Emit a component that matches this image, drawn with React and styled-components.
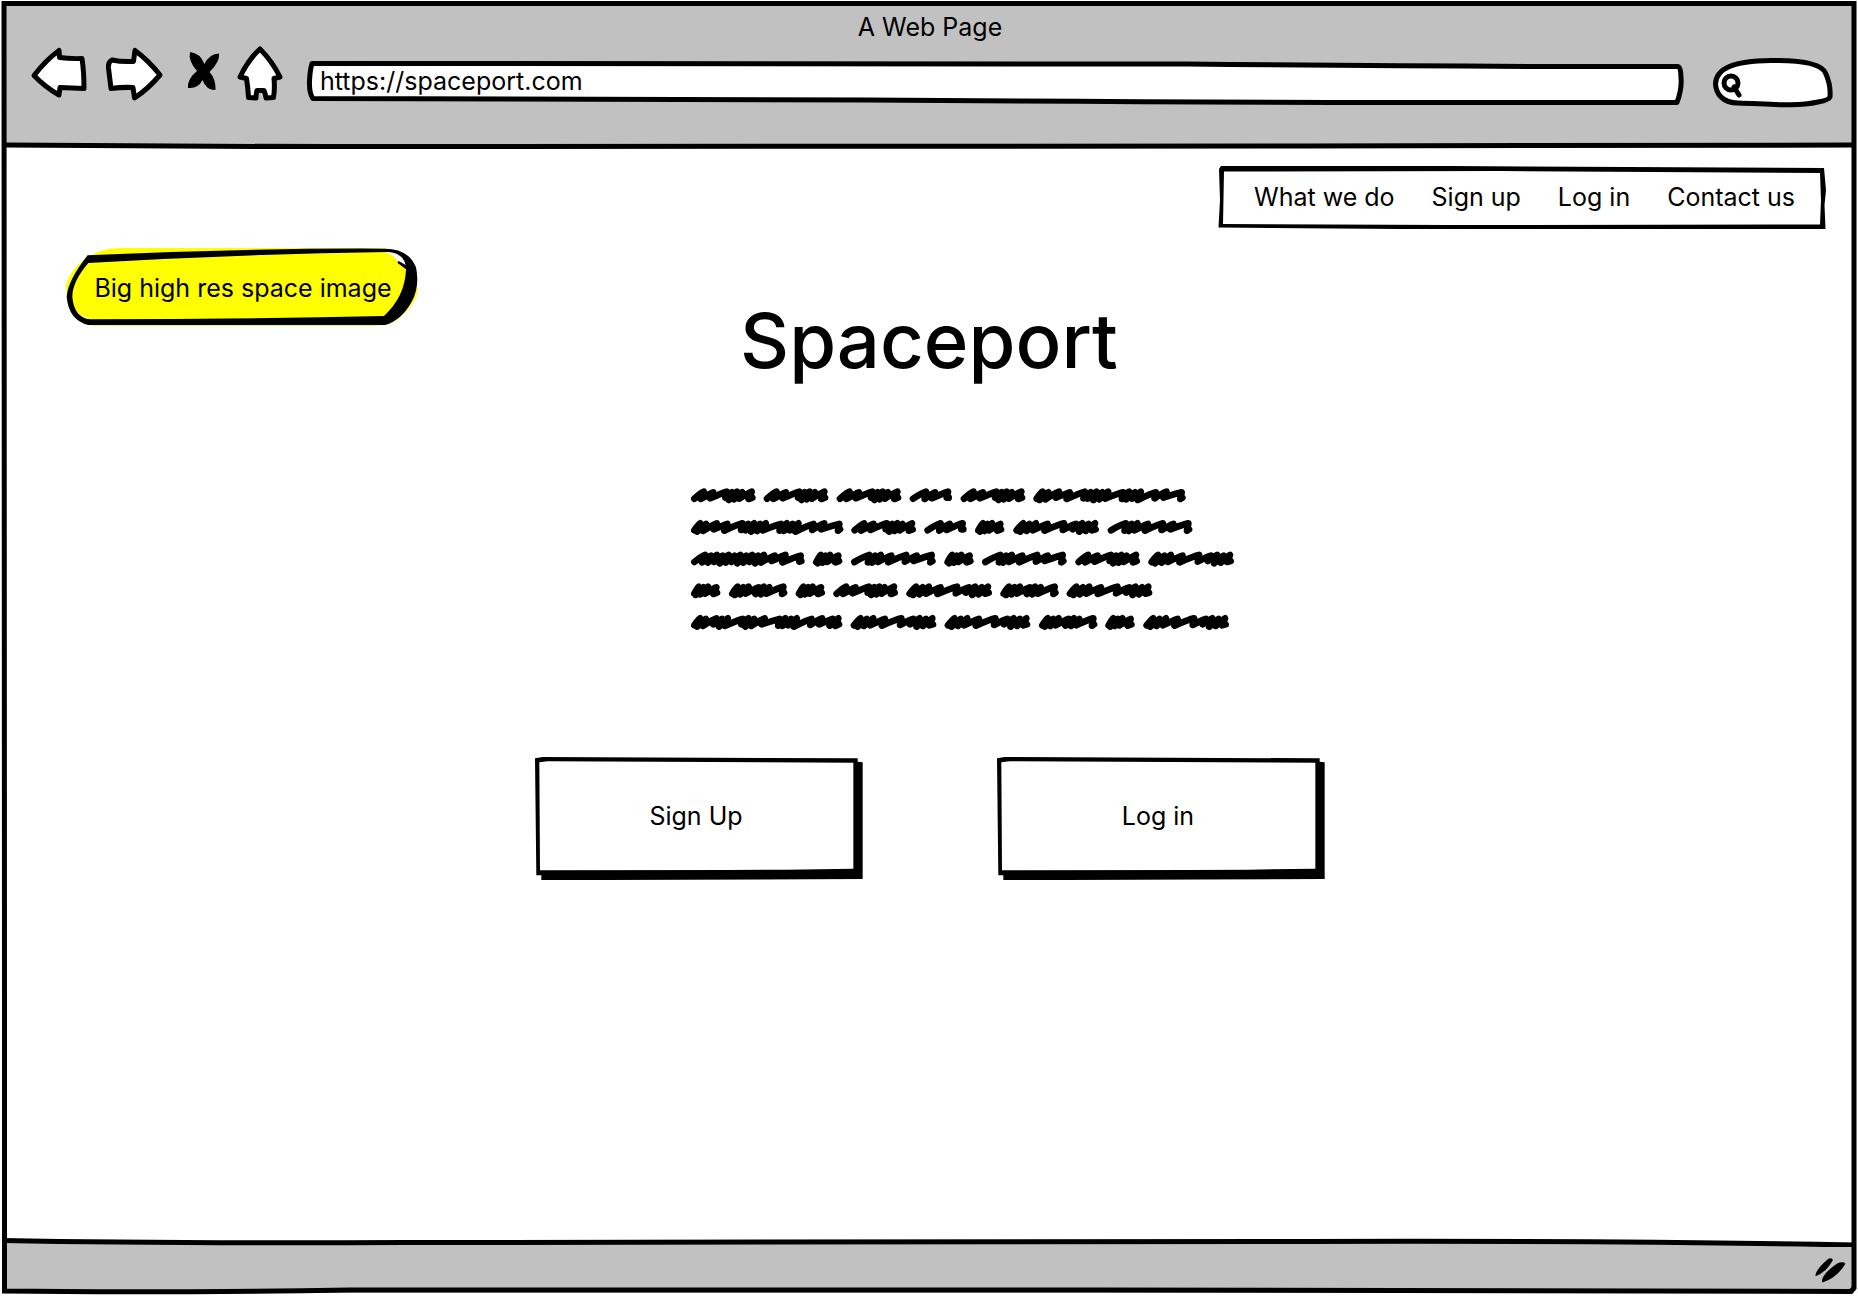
import React from "react";
import styled, { createGlobalStyle } from "styled-components";

const INK = "#000";
const CHROME = "#c1c1c1";

const GlobalStyle = createGlobalStyle`
  *, *::before, *::after { box-sizing: border-box; }
  body {
    margin: 0;
    background: #fff;
    color: ${INK};
    font-family: Inter, "Noto Sans", sans-serif;
    font-size: 25px;
    line-height: 32px;
  }
  button, input { font: inherit; color: inherit; }
`;

const BrowserWindow = styled.div`
  position: relative;
  display: flex;
  flex-direction: column;
  min-height: 100vh;
  padding: 3px 4px;
`;

const Sketch = styled.svg`
  position: absolute;
  inset: 0;
  width: 100%;
  height: 100%;
  pointer-events: none;
  overflow: visible;
  z-index: ${(p) => p.$layer ?? 0};
`;

const Rule = styled.svg`
  display: block;
  flex: none;
  width: 100%;
  height: 10px;
  background: linear-gradient(${(p) => p.$above} 50%, ${(p) => p.$below} 50%);
`;

const Chrome = styled.header`
  padding: 8px 21px 33px 27px;
  background: ${CHROME};
`;

const WindowTitle = styled.div`
  padding-right: 4px;
  text-align: center;
`;

const Toolbar = styled.div`
  display: flex;
  align-items: center;
  height: 64px;
  gap: 28px;
  padding-top: 15px;
`;

const ToolButtons = styled.div`
  display: flex;
  align-self: flex-start;
  gap: 18px;
  margin: -11px -4px 0 0;
`;

const ToolButton = styled.button`
  width: ${(p) => p.$width}px;
  height: 54px;
  padding: 0;
  border: 0;
  background: none;
  cursor: pointer;
  svg { display: block; width: 100%; height: 100%; overflow: visible; }
`;

const Field = styled.label`
  position: relative;
  display: flex;
  align-items: flex-start;
  flex: ${(p) => (p.$width ? "none" : "1")};
  width: ${(p) => (p.$width ? `${p.$width}px` : "auto")};
  height: ${(p) => p.$height}px;
  padding: 4px 14px 0 ${(p) => p.$inset}px;
`;

const FieldInput = styled.input`
  position: relative;
  flex: 1;
  min-width: 0;
  height: 32px;
  padding: 0;
  border: 0;
  outline: 0;
  background: transparent;
`;

const Main = styled.main`
  flex: 1;
  padding: 16px 28px 32px;
`;

const Nav = styled.nav`
  position: relative;
  display: flex;
  justify-content: space-between;
  align-items: center;
  width: 608px;
  height: 63px;
  margin-left: auto;
  padding: 0 31px 2px 36px;
`;

const NavLink = styled.a`
  position: relative;
  color: inherit;
  text-decoration: none;
`;

const Masthead = styled.div`
  display: grid;
  grid-template-columns: 1fr auto 1fr;
  padding: 19px 34px 0;
`;

const Note = styled.div`
  position: relative;
  display: flex;
  align-items: center;
  justify-content: center;
  width: 352px;
  height: 78px;
  padding: 2px 0 0 2px;
  span { position: relative; }
`;

const Heading = styled.h1`
  margin: 44px 0 0;
  font-size: 76px;
  line-height: 96px;
  font-weight: 500;
`;

const Column = styled.div`
  width: 790px;
  margin: 0 auto;
  padding-left: 2px;
  box-sizing: content-box;
`;

const Copy = styled.svg`
  display: block;
  width: 544px;
  height: 146px;
  margin: 100px 0 123px 156px;
`;

const Actions = styled.div`
  display: flex;
  justify-content: space-between;
`;

const ActionButton = styled.button`
  position: relative;
  width: 328px;
  height: 123px;
  padding: 0 6px 6px 0;
  border: 0;
  background: none;
  cursor: pointer;
  span { position: relative; }
`;

const StatusBar = styled.footer`
  display: flex;
  justify-content: flex-end;
  align-items: center;
  height: 46px;
  padding: 0 8px;
  background: ${CHROME};
`;

const Grip = styled.svg`
  width: 32px;
  height: 26px;
`;

/* Pen steps: how far the scribble moves before its next peak. */
const STEP = { d: 17, l: 31, w: 44 };

/* Every scribbled word is its width and its sequence of pen steps. */
const WORDS = {
  A: [194, "llwdddl"],
  B: [127, "wlw"],
  C: [457, "ddllwddddwdddwlw"],
  D: [88, "dddl"],
  E: [257, "dddlwlddd"],
  F: [254, "wddlwlw"],
  G: [341, "lddddddddddllw"],
  H: [175, "dddlddw"],
  I: [454, "ddlddwddlwdddwlld"],
};

const LINES = [
  [["A", 36], ["A", 254], ["A", 473], ["B", 692], ["A", 845], ["C", 1063]],
  [["C", 36], ["A", 517], ["B", 736], ["D", 888], ["E", 1003], ["F", 1286]],
  [["G", 36], ["D", 402], ["F", 516], ["D", 796], ["F", 909], ["A", 1189], ["E", 1408]],
  [["D", 36], ["H", 150], ["D", 350], ["A", 463], ["E", 682], ["H", 964], ["E", 1163]],
  [["I", 36], ["E", 515], ["E", 797], ["H", 1080], ["D", 1279], ["E", 1393]],
];

function scribble([key, start], row) {
  const [width, steps] = WORDS[key];
  const top = 48 + row * 95;
  const total = [...steps].reduce((sum, s) => sum + STEP[s], 0);
  const scale = (width - 22) / total;
  let x = start + 10;
  let d = `M${x} ${top + 20}`;
  [...steps].forEach((s, i) => {
    const from = x;
    x += STEP[s] * scale;
    const peak = top - 1 + (i % 2) * 2;
    const low = top + 20 + (s === "d" ? 4 : 1) - (i % 3) * 2;
    const back = s === "w" ? 4 : 9;
    d += ` Q${from + (x - from) * 0.7} ${peak + 3} ${x} ${peak} L${x - back} ${low}`;
  });
  return d + ` L${x + 2} ${top + 17}`;
}

function ScribbledCopy() {
  return (
    <Copy viewBox="36 36 1632 438" role="img" aria-label="Introductory text">
      <g fill="none" stroke={INK} strokeWidth="20" strokeLinecap="round" strokeLinejoin="round">
        {LINES.map((line, row) =>
          line.map((word) => <path key={`${row}-${word[1]}`} d={scribble(word, row)} />)
        )}
      </g>
    </Copy>
  );
}

function SketchButton({ children }) {
  return (
    <ActionButton type="button">
      <Sketch viewBox="47 49 985 370" preserveAspectRatio="none" aria-hidden="true">
        <path d="M47 53L70 49L1016 53V63L1031 65V416L250 419H66V405H51Z" fill={INK} />
        <path d="M60 65L85 62L1003 66V385L800 388L620 389L62 390Z" fill="#fff" />
      </Sketch>
      <span>{children}</span>
    </ActionButton>
  );
}

const outline = { fill: "#fff", stroke: INK, strokeWidth: 5, strokeLinejoin: "round", strokeLinecap: "round" };

export default function App() {
  return (
    <>
      <GlobalStyle />
      <BrowserWindow>
        <Chrome>
          <WindowTitle>A Web Page</WindowTitle>
          <Toolbar>
            <ToolButtons>
              <ToolButton type="button" aria-label="Back" $width={56}>
                <svg viewBox="31 47 56 54">
                  <path {...outline} d="M34 75.500Q46 60 59 50.500L59.500 57.500Q70 59 82 58.500Q84 72 84 88.500Q72 88 60 87.500L59 95Q45 87 34 75.500Z" />
                </svg>
              </ToolButton>
              <ToolButton type="button" aria-label="Forward" $width={58}>
                <svg viewBox="105 47 58 54">
                  <path {...outline} d="M160 75Q149 61 135 50.500L133.500 61.500Q121 62 112 60Q108 62 108.500 68L111 88.500Q122 87 133 87.500L134.500 98Q148 89 160 75Z" />
                </svg>
              </ToolButton>
              <ToolButton type="button" aria-label="Stop" $width={38}>
                <svg viewBox="181 47 38 54">
                  <path fill={INK} d="M190 52Q200 53 204.500 64Q209 54 219 53.500Q220 62 209.500 72Q216 79 215.500 90Q206 90 202.500 80Q198 89 188 88Q187 79 197 71Q188 61 190 52Z" />
                </svg>
              </ToolButton>
              <ToolButton type="button" aria-label="Home" $width={46}>
                <svg viewBox="237 47 46 54">
                  <path {...outline} d="M260 49Q272 61 280 77L274 78.500Q275 88 273.500 97.500L266 98Q265.500 94 264 90.500H257Q256 94 256 98L248.500 97.500Q248 88 246.500 78.500L240 77Q248 60 260 49Z" />
                </svg>
              </ToolButton>
            </ToolButtons>
            <Field $height={44} $inset={13}>
              <Sketch viewBox="0 0 1377 44" preserveAspectRatio="none" aria-hidden="true">
                <path {...outline} d="M5 2.500Q500 1 880 3Q1150 6 1371 5.500Q1374 6 1374 17Q1375 28 1370 41.500Q900 42 560 39Q300 38 6 37.500Q2 32 2.500 20Q3 9 5 2.500Z" />
              </Sketch>
              <FieldInput aria-label="Address" defaultValue="https://spaceport.com" />
            </Field>
            <Field $height={50} $width={121} $inset={32}>
              <Sketch viewBox="1712 57 121 50" preserveAspectRatio="none" aria-hidden="true">
                <path {...outline} d="M1738 102C1722 102 1716 92 1715.500 83C1716 68 1732 60 1771 59.500C1800 59 1821 62 1825.500 72Q1831 84 1830 96Q1829 99 1818 101C1796 106 1770 103 1738 102Z" />
                <ellipse cx="1731" cy="82" rx="7" ry="7" fill="none" stroke={INK} strokeWidth="5" />
                <path d="M1734 86L1739 94" stroke={INK} strokeWidth="5" strokeLinecap="round" />
              </Sketch>
              <FieldInput aria-label="Search" type="text" />
            </Field>
          </Toolbar>
        </Chrome>
        <Rule $above={CHROME} $below="#fff" viewBox="0 0 1850 10" preserveAspectRatio="none" aria-hidden="true">
          <path d="M0 5Q250 7 500 6.500T1300 6Q1600 5 1850 5" fill="none" stroke={INK} strokeWidth="5" />
        </Rule>

        <Main>
          <Nav aria-label="Site">
            <Sketch viewBox="1218 166 608 63" preserveAspectRatio="none" aria-hidden="true">
              <path fill={INK} d="M1219 169L1221 166H1450L1824 168L1826 190L1824.500 205L1825.500 229H1600L1400 229L1218.500 227.500L1220 200Z" />
              <path fill="#fff" d="M1224 171.500L1500 171L1820 173L1821 200L1820 224.500L1450 225L1223 224Z" />
            </Sketch>
            <NavLink href="#what">What we do</NavLink>
            <NavLink href="#signup">Sign up</NavLink>
            <NavLink href="#login">Log in</NavLink>
            <NavLink href="#contact">Contact us</NavLink>
          </Nav>

          <Masthead>
            <Note>
              <Sketch viewBox="78 54 1056 234" preserveAspectRatio="none" aria-hidden="true">
                <path fill="#ff0" d="M240 54H1035L1100 120L1134 180Q1125 225 1080 262Q1060 286 1000 288H160Q110 250 92 228Q78 205 78 165Q90 115 150 77Q190 55 240 54Z" />
                <path fill="#fff" d="M1035 66Q1085 62 1100 112Q1075 80 1035 66ZM98 228Q118 262 155 268L120 268Z" />
                <path fill={INK} d="M143 76Q600 54 1035 56Q1105 56 1128 112Q1140 170 1115 215Q1085 270 1035 285H145Q86 270 80 200Q84 150 143 76ZM145 99Q97 155 97 200Q102 262 150 268Q600 268 1032 258Q1095 200 1098 118L1072 98L1076 93L1097 105Q1090 70 1045 66Q600 72 145 99Z" fillRule="evenodd" />
              </Sketch>
              <span>Big high res space image</span>
            </Note>
            <Heading>Spaceport</Heading>
          </Masthead>

          <Column>
            <ScribbledCopy />
            <Actions>
              <SketchButton>Sign Up</SketchButton>
              <SketchButton>Log in</SketchButton>
            </Actions>
          </Column>
        </Main>

        <Rule $above="#fff" $below={CHROME} viewBox="0 0 1850 10" preserveAspectRatio="none" aria-hidden="true">
          <path d="M1300 5Q1600 5 1850 9V10H1300Z" fill={CHROME} />
          <path d="M1300 0H1850V8Q1600 4 1300 4Z" fill="#fff" />
          <path d="M0 3.500Q150 6.500 400 5.500T1300 4.500Q1600 3.500 1850 8" fill="none" stroke={INK} strokeWidth="5" />
        </Rule>
        <StatusBar>
          <Grip viewBox="1814 1257 32 27" aria-hidden="true">
            <path fill={INK} d="M1815 1277Q1814 1271 1828 1259Q1832 1257 1833 1260Q1826 1273 1815 1277ZM1822 1283.500Q1820 1276 1837 1264Q1844 1261 1846 1264Q1837 1279 1822 1283.500Z" />
          </Grip>
        </StatusBar>
        <Sketch $layer={1} viewBox="0 0 1858 1296" preserveAspectRatio="none" aria-hidden="true">
          <path d="M4 3.500H1854Q1853 600 1854 1288L1851 1291.500Q1500 1292 1100 1290Q600 1289 350 1290Q150 1293 4.500 1291Q5 1200 4.500 1000Q3 500 4 3.500Z" fill="none" stroke={INK} strokeWidth="5" />
        </Sketch>
      </BrowserWindow>
    </>
  );
}
